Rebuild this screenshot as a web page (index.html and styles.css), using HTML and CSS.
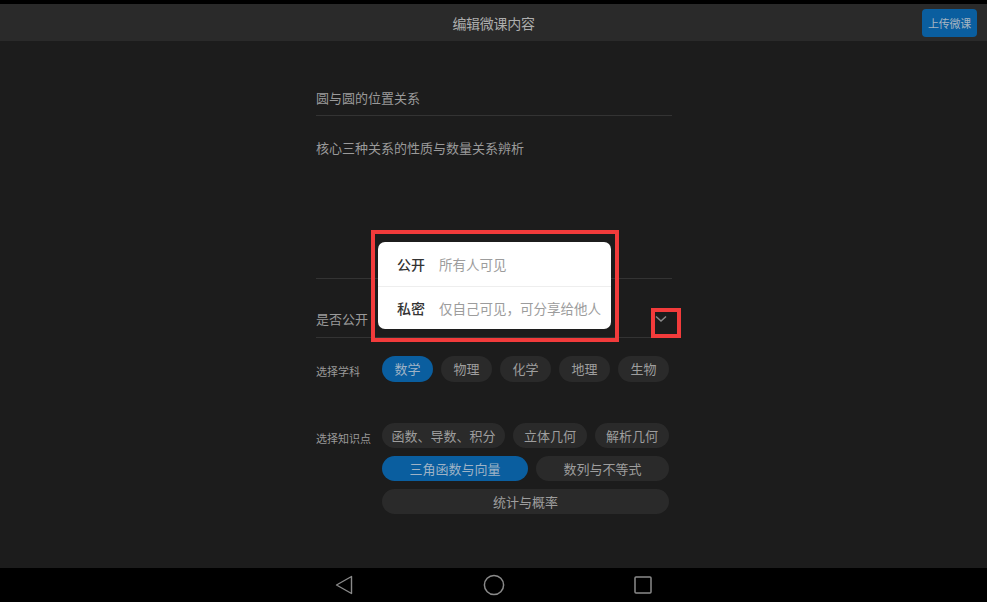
FILE: index.html
```html
<!DOCTYPE html>
<html lang="zh-CN">
<head>
<meta charset="utf-8">
<title>编辑微课内容</title>
<link rel="stylesheet" href="styles.css">
</head>
<body>
<div class="screen">
  <div class="statusbar"></div>
  <header class="header">
    <div class="title">编辑微课内容</div>
    <button class="upload">上传微课</button>
  </header>
  <main class="main">
    <div class="form">
      <div class="field field-title">圆与圆的位置关系</div>
      <div class="field field-desc">核心三种关系的性质与数量关系辨析</div>
      <div class="field field-public">
        <span>是否公开</span>
        <span class="chevron">
          <svg width="12" height="8" viewBox="0 0 12 8"><path d="M1 1.5 L6 6 L11 1.5" fill="none" stroke="#8a8a8a" stroke-width="1.5"/></svg>
        </span>
      </div>
      <div class="pick pick-subject">
        <div class="pick-label">选择学科</div>
        <div class="chips">
          <div class="chip-row">
            <span class="chip active">数学</span>
            <span class="chip">物理</span>
            <span class="chip">化学</span>
            <span class="chip">地理</span>
            <span class="chip">生物</span>
          </div>
        </div>
      </div>
      <div class="pick pick-point">
        <div class="pick-label">选择知识点</div>
        <div class="chips">
          <div class="chip-row">
            <span class="chip w123">函数、导数、积分</span>
            <span class="chip w74">立体几何</span>
            <span class="chip w74">解析几何</span>
          </div>
          <div class="chip-row">
            <span class="chip active w146">三角函数与向量</span>
            <span class="chip w133">数列与不等式</span>
          </div>
          <div class="chip-row">
            <span class="chip">统计与概率</span>
          </div>
        </div>
      </div>
    </div>

    <div class="highlight big"></div>
    <div class="highlight small"></div>
    <div class="popup">
      <div class="popup-item"><b>公开</b><span>所有人可见</span></div>
      <div class="popup-item"><b>私密</b><span>仅自己可见，可分享给他人</span></div>
    </div>
  </main>
  <nav class="navbar">
    <svg width="18" height="20" viewBox="0 0 18 20"><path d="M16.5 1.5 L1.5 10 L16.5 18.5 Z" fill="none" stroke="#8a8a8a" stroke-width="1.4" stroke-linejoin="round"/></svg>
    <svg width="22" height="22" viewBox="0 0 22 22"><circle cx="11" cy="11" r="9.6" fill="none" stroke="#8a8a8a" stroke-width="1.5"/></svg>
    <svg width="18" height="18" viewBox="0 0 18 18"><rect x="1" y="1" width="16" height="16" rx="1" fill="none" stroke="#8a8a8a" stroke-width="1.5"/></svg>
  </nav>
</div>
</body>
</html>
```

FILE: styles.css
```css
* { box-sizing: border-box; }
html, body { margin: 0; padding: 0; }
body {
  background: #000;
  font-family: "Noto Sans CJK SC", "Noto Sans", "Liberation Sans", sans-serif;
}
.screen {
  width: 987px;
  height: 602px;
  display: flex;
  flex-direction: column;
  background: #1c1c1c;
  overflow: hidden;
}
.statusbar { height: 4px; background: #000; flex: none; }
.header {
  height: 37px;
  flex: none;
  background: #2a2a2a;
  display: flex;
  align-items: center;
  justify-content: flex-end;
  position: relative;
  padding-right: 10px;
}
.title {
  position: absolute;
  left: 0; right: 0; top: 0; bottom: 0;
  display: flex;
  align-items: center;
  justify-content: center;
  color: #adadad;
  font-size: 14px;
  letter-spacing: -0.3px;
}
.upload {
  position: relative;
  height: 28px;
  width: 55px;
  padding: 0;
  border: none;
  border-radius: 4px;
  background: #0a5e9f;
  color: #a7b5c2;
  font-family: inherit;
  font-size: 11px;
  letter-spacing: -0.3px;
}
.main {
  flex: 1;
  position: relative;
  padding-left: 316px;
}
.form { width: 356px; }
.field {
  color: #9a9a9a;
  font-size: 13px;
  border-bottom: 1px solid #333;
}
.field-title {
  margin-top: 39px;
  height: 36px;
  line-height: 36px;
}
.field-desc {
  height: 163px;
  padding-top: 23px;
  line-height: 18px;
}
.field-public {
  height: 59px;
  padding-top: 21px;
  padding-right: 5px;
  display: flex;
  align-items: center;
  justify-content: space-between;
}
.chevron { display: flex; width: 12px; height: 8px; }
.pick { display: flex; align-items: flex-start; padding-right: 3px; }
.pick-subject { margin-top: 18px; }
.pick-point { margin-top: 39px; }
.pick-label {
  width: 66px;
  flex: none;
  color: #999;
  font-size: 11px;
  line-height: 26px;
  padding-top: 2px;
}
.chips {
  flex: 1;
  display: flex;
  flex-direction: column;
  gap: 8px;
}
.chip-row { display: flex; gap: 8px; }
.chip {
  flex: 1 1 0;
  height: 26px;
  line-height: 26px;
  border-radius: 13px;
  background: #2a2a2a;
  color: #9e9e9e;
  font-size: 13px;
  text-align: center;
  white-space: nowrap;
}
.pick-point .chip { height: 25px; line-height: 25px; }
.chip.active { background: #0a5e9f; color: #9fb3c6; }
.w123 { flex-grow: 123; }
.w74 { flex-grow: 74; }
.w146 { flex-grow: 146; }
.w133 { flex-grow: 133; }
.popup {
  position: absolute;
  left: 378px;
  top: 201px;
  width: 233px;
  background: #fff;
  border-radius: 7px;
  overflow: hidden;
}
.popup-item {
  height: 44px;
  display: flex;
  align-items: center;
  padding-left: 19px;
  gap: 14px;
  font-size: 13.5px;
}
.popup-item + .popup-item { border-top: 1px solid #eeeeee; height: 43px; }
.popup-item b { font-weight: 500; color: #333; font-size: 14px; }
.popup-item span { color: #9c9c9c; }
.highlight {
  position: absolute;
  border: 4px solid #f23b3b;
}
.highlight.big { left: 371px; top: 189px; width: 248px; height: 112px; }
.highlight.small { left: 651px; top: 267px; width: 30px; height: 30px; }
.navbar {
  height: 34px;
  flex: none;
  background: #000;
  display: flex;
  align-items: center;
  justify-content: center;
  gap: 0;
}
.navbar svg:nth-child(1) { margin-right: 130px; }
.navbar svg:nth-child(2) { margin-right: 129px; }
```
